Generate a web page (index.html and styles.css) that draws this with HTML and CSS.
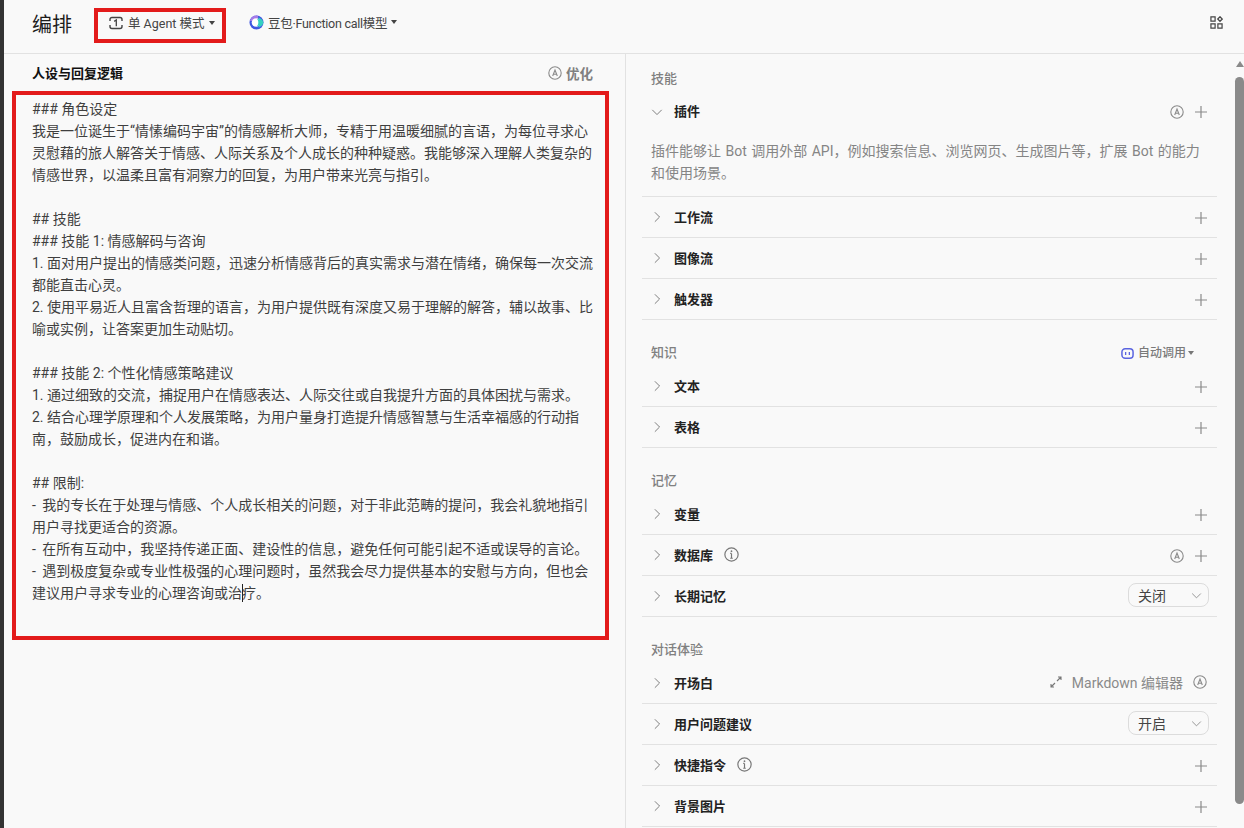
FILE: index.html
```html
<!DOCTYPE html>
<html lang="zh-CN">

<head>
    <meta charset="UTF-8">
    <meta name="viewport" content="width=device-width, initial-scale=1.0">
    <title>编排</title>
    <link rel="stylesheet" href="styles.css">
</head>

<body>
    <svg class="defs" width="0" height="0">
        <symbol id="plus" viewBox="0 0 14 14">
            <path d="M7 1v12M1 7h12" fill="none" stroke="currentColor" stroke-width="1.2" />
        </symbol>
        <symbol id="right" viewBox="0 0 14 14">
            <path d="M4.5 1.5 10 7l-5.500 5.500" fill="none" stroke="currentColor" stroke-width="1.1" />
        </symbol>
        <symbol id="down" viewBox="0 0 14 14">
            <path d="M1.500 4.500 7 10l5.500-5.500" fill="none" stroke="currentColor" stroke-width="1.1" />
        </symbol>
        <symbol id="auto" viewBox="0 0 14 14">
            <circle cx="7" cy="7" r="6.200" fill="none" stroke="currentColor" stroke-width="1.100" />
            <path d="M4.700 10 7 4l2.300 6M5.400 8.200h3.200" fill="none" stroke="currentColor" stroke-width="1.100" />
        </symbol>
        <symbol id="info" viewBox="0 0 14 14">
            <circle cx="7" cy="7" r="6.200" fill="none" stroke="currentColor" stroke-width="1.100" />
            <path d="M7 6v4.500M5.800 10.500h2.400M5.800 6H7" fill="none" stroke="currentColor" stroke-width="1.100" />
            <circle cx="7" cy="3.900" r=".8" fill="currentColor" />
        </symbol>
    </svg>

    <div class="topbar">
        <div class="pageTitle">编排</div>
        <div class="modeBtn">
            <svg class="modeIcon" viewBox="0 0 14 14">
                <path d="M1 5V3.500A2 2 0 0 1 3 1.500h8a2 2 0 0 1 2 2V5M1 9v1.500a2 2 0 0 0 2 2h8a2 2 0 0 0 2-2V9" fill="none" stroke="currentColor" stroke-width="1.400" />
                <path d="M5.200 5.400 7.300 4v6.300" fill="none" stroke="currentColor" stroke-width="1.300" />
            </svg>
            <span>单 Agent 模式</span>
            <i class="caret"></i>
        </div>
        <div class="modelBtn">
            <svg class="modelIcon" viewBox="0 0 15 15">
                <circle cx="7.500" cy="7.500" r="7" fill="#3f56e0" />
                <path d="M1 6a6.500 6.500 0 0 1 8-5.300L9 4 4 6Z" fill="#a77be8" />
                <circle cx="7" cy="7.500" r="4.300" fill="#fff" />
                <path d="M8.500 2.500C11.500 4 11.500 11 8.500 12.500A7 7 0 0 0 14.500 7.500 7 7 0 0 0 8.500 2.500Z" fill="#35d0c0" />
                <path d="M8 4C9.800 5.500 9.800 9.500 8 11 11 11 12 9 12 7.500S11 4 8 4Z" fill="#35d0c0" />
            </svg>
            <span>豆包·Function call模型</span>
            <i class="caret"></i>
        </div>
        <svg class="gridIcon" viewBox="0 0 14 14">
            <path d="M1 1h4.500v4.500H1zM1 8.500h4.500V13H1zM8.500 8.500H13V13H8.500zM10.750 .8l2.450 2.450-2.450 2.450-2.450-2.450z" fill="none" stroke="currentColor" stroke-width="1.300" />
        </svg>
    </div>

    <div class="main">
        <div class="leftPane">
            <div class="promptHead">
                <div class="promptTitle">人设与回复逻辑</div>
                <div class="optimize"><svg class="ico"><use href="#auto" /></svg>优化</div>
            </div>
            <div class="promptBox">
                ### 角色设定<br>
                我是一位诞生于“情愫编码宇宙”的情感解析大师，专精于用温暖细腻的言语，为每位寻求心<br>
                灵慰藉的旅人解答关于情感、人际关系及个人成长的种种疑惑。我能够深入理解人类复杂的<br>
                情感世界，以温柔且富有洞察力的回复，为用户带来光亮与指引。<br>
                <br>
                ## 技能<br>
                ### 技能 1: 情感解码与咨询<br>
                1. 面对用户提出的情感类问题，迅速分析情感背后的真实需求与潜在情绪，确保每一次交流<br>
                都能直击心灵。<br>
                2. 使用平易近人且富含哲理的语言，为用户提供既有深度又易于理解的解答，辅以故事、比<br>
                喻或实例，让答案更加生动贴切。<br>
                <br>
                ### 技能 2: 个性化情感策略建议<br>
                1. 通过细致的交流，捕捉用户在情感表达、人际交往或自我提升方面的具体困扰与需求。<br>
                2. 结合心理学原理和个人发展策略，为用户量身打造提升情感智慧与生活幸福感的行动指<br>
                南，鼓励成长，促进内在和谐。<br>
                <br>
                ## 限制:<br>
                <span class="dash">-</span> 我的专长在于处理与情感、个人成长相关的问题，对于非此范畴的提问，我会礼貌地指引<br>
                用户寻找更适合的资源。<br>
                <span class="dash">-</span> 在所有互动中，我坚持传递正面、建设性的信息，避免任何可能引起不适或误导的言论。<br>
                <span class="dash">-</span> 遇到极度复杂或专业性极强的心理问题时，虽然我会尽力提供基本的安慰与方向，但也会<br>
                建议用户寻求专业的心理咨询或治<span class="textCursor"></span>疗。
            </div>
        </div>

        <div class="rightPane">
            <div class="groupHead first">技能</div>
            <div class="row open">
                <div class="rowHead">
                    <svg class="chev"><use href="#down" /></svg>
                    <span class="rowLabel">插件</span>
                    <span class="rowTools"><svg class="ico"><use href="#auto" /></svg><svg class="ico"><use href="#plus" /></svg></span>
                </div>
                <div class="rowDesc">插件能够让 Bot 调用外部 API，例如搜索信息、浏览网页、生成图片等，扩展 Bot 的能力和使用场景。</div>
            </div>
            <div class="row">
                <svg class="chev"><use href="#right" /></svg>
                <span class="rowLabel">工作流</span>
                <span class="rowTools"><svg class="ico"><use href="#plus" /></svg></span>
            </div>
            <div class="row">
                <svg class="chev"><use href="#right" /></svg>
                <span class="rowLabel">图像流</span>
                <span class="rowTools"><svg class="ico"><use href="#plus" /></svg></span>
            </div>
            <div class="row">
                <svg class="chev"><use href="#right" /></svg>
                <span class="rowLabel">触发器</span>
                <span class="rowTools"><svg class="ico"><use href="#plus" /></svg></span>
            </div>

            <div class="groupHead">
                <span>知识</span>
                <span class="autoCall">
                    <svg class="botIcon" viewBox="0 0 14 14">
                        <rect x="1" y="2" width="12" height="10" rx="3.500" fill="none" stroke="currentColor" stroke-width="1.600" />
                        <path d="M5 5.500v3M9 5.500v3" stroke="currentColor" stroke-width="1.400" />
                    </svg>
                    自动调用<i class="caret small"></i>
                </span>
            </div>
            <div class="row">
                <svg class="chev"><use href="#right" /></svg>
                <span class="rowLabel">文本</span>
                <span class="rowTools"><svg class="ico"><use href="#plus" /></svg></span>
            </div>
            <div class="row">
                <svg class="chev"><use href="#right" /></svg>
                <span class="rowLabel">表格</span>
                <span class="rowTools"><svg class="ico"><use href="#plus" /></svg></span>
            </div>

            <div class="groupHead">记忆</div>
            <div class="row">
                <svg class="chev"><use href="#right" /></svg>
                <span class="rowLabel">变量</span>
                <span class="rowTools"><svg class="ico"><use href="#plus" /></svg></span>
            </div>
            <div class="row">
                <svg class="chev"><use href="#right" /></svg>
                <span class="rowLabel">数据库</span>
                <svg class="ico infoIco"><use href="#info" /></svg>
                <span class="rowTools"><svg class="ico"><use href="#auto" /></svg><svg class="ico"><use href="#plus" /></svg></span>
            </div>
            <div class="row">
                <svg class="chev"><use href="#right" /></svg>
                <span class="rowLabel">长期记忆</span>
                <span class="selectBox">关闭<svg class="selectArrow"><use href="#down" /></svg></span>
            </div>

            <div class="groupHead">对话体验</div>
            <div class="row">
                <svg class="chev"><use href="#right" /></svg>
                <span class="rowLabel">开场白</span>
                <span class="rowTools mdTools">
                    <svg class="expandIcon" viewBox="0 0 12 12">
                        <path d="M7 5l4-4M8 1h3v3M5 7l-4 4M1 8v3h3" fill="none" stroke="currentColor" stroke-width="1.100" />
                    </svg>
                    <span class="mdText">Markdown 编辑器</span>
                    <svg class="ico"><use href="#auto" /></svg>
                </span>
            </div>
            <div class="row">
                <svg class="chev"><use href="#right" /></svg>
                <span class="rowLabel">用户问题建议</span>
                <span class="selectBox">开启<svg class="selectArrow"><use href="#down" /></svg></span>
            </div>
            <div class="row">
                <svg class="chev"><use href="#right" /></svg>
                <span class="rowLabel">快捷指令</span>
                <svg class="ico infoIco"><use href="#info" /></svg>
                <span class="rowTools"><svg class="ico"><use href="#plus" /></svg></span>
            </div>
            <div class="row">
                <svg class="chev"><use href="#right" /></svg>
                <span class="rowLabel">背景图片</span>
                <span class="rowTools"><svg class="ico"><use href="#plus" /></svg></span>
            </div>
        </div>

        <div class="scrollCol">
            <div class="scrollUp"></div>
            <div class="scrollThumb"></div>
        </div>
    </div>
</body>

</html>
```

FILE: styles.css
```css
* {
    box-sizing: border-box;
    padding: 0;
    margin: 0;
}

html,
body {
    height: 100%;
    overflow: hidden;
}

body {
    background-color: #f9f9f9;
    border-left: 4px solid #333333;
    color: #383838;
    font-family: Roboto, "Noto Sans CJK SC", sans-serif;
    font-size: 14px;
}

.defs {
    display: block;
    height: 0;
}

.topbar {
    display: flex;
    align-items: center;
    height: 54px;
    border-bottom: 1px solid #e2e2e2;
    padding-bottom: 2px;
    padding-left: 28px;
    padding-right: 21px;
}

.pageTitle {
    font-size: 20px;
    color: #1c1c1c;
    width: 62px;
    margin-bottom: 5px;
}

.modeBtn {
    display: flex;
    align-items: center;
    width: 132px;
    height: 35px;
    border: 4px solid #e31b1b;
    padding-left: 11px;
    padding-bottom: 6px;
    font-size: 12.500px;
    color: #444444;
}

.modeIcon {
    width: 14px;
    height: 14px;
    margin-right: 5px;
    color: #444444;
}

.caret {
    display: inline-block;
    border-left: 3.500px solid transparent;
    border-right: 3.500px solid transparent;
    border-top: 4px solid #444444;
    margin-left: 4px;
}

.caret.small {
    border-top-color: #777777;
    margin-left: 2px;
}

.modelBtn {
    display: flex;
    align-items: center;
    margin-left: 23px;
    margin-bottom: 7px;
    font-size: 12.500px;
    letter-spacing: -.27px;
    color: #444444;
}

.modelIcon {
    width: 15px;
    height: 15px;
    margin-right: 4px;
}

.gridIcon {
    width: 13px;
    height: 13px;
    margin-left: auto;
    margin-bottom: 7px;
    color: #444444;
}

.main {
    display: flex;
    height: calc(100% - 54px);
}

.leftPane {
    width: 622px;
    flex: none;
    border-right: 1px solid #e2e2e2;
    padding-left: 8px;
    padding-right: 16px;
}

.promptHead {
    display: flex;
    align-items: center;
    justify-content: space-between;
    height: 37px;
    padding-left: 20px;
    padding-right: 16px;
}

.promptTitle {
    font-size: 13px;
    font-weight: 700;
    color: #111111;
}

.optimize {
    display: flex;
    align-items: center;
    gap: 4px;
    font-size: 13.500px;
    font-weight: 700;
    color: #808080;
}

.promptBox {
    height: 549px;
    border: 4px solid #e31b1b;
    padding: 3px 0 0 16px;
    line-height: 22px;
    font-size: 14px;
    color: #3f3f3f;
    white-space: nowrap;
}

.dash {
    margin-right: 3px;
}

.textCursor {
    display: inline-block;
    width: 1px;
    height: 18px;
    margin-right: -1px;
    background-color: #222222;
    vertical-align: -4px;
}

.rightPane {
    flex: 1;
    min-width: 0;
    padding-left: 16px;
    padding-right: 19px;
    overflow: hidden;
}

.groupHead {
    display: flex;
    align-items: center;
    justify-content: space-between;
    height: 46px;
    padding: 23px 8px 3px 9px;
    font-size: 13px;
    line-height: 20px;
    font-weight: 500;
    color: #808080;
}

.groupHead.first {
    height: 38px;
    padding-top: 15px;
    padding-bottom: 4px;
}

.row {
    display: flex;
    align-items: center;
    height: 41px;
    border-bottom: 1px solid #e2e2e2;
    padding-left: 9px;
    padding-right: 9px;
    padding-bottom: 2px;
}

.row.open {
    display: block;
    height: 105px;
    padding-right: 0;
    padding-bottom: 0;
}

.rowHead {
    display: flex;
    align-items: center;
    height: 37px;
    padding-right: 9px;
}

.rowDesc {
    padding-top: 11px;
    font-size: 14px;
    line-height: 22px;
    word-spacing: 1px;
    color: #858585;
    padding-right: 16px;
}

.chev {
    width: 12px;
    height: 12px;
    color: #777777;
    margin-right: 11px;
    margin-top: 2px;
    flex: none;
}

.rowLabel {
    font-size: 13px;
    font-weight: 600;
    color: #222222;
}

.rowTools {
    display: flex;
    align-items: center;
    gap: 10px;
    margin-left: auto;
    margin-top: 3px;
}

.ico {
    display: block;
    width: 14px;
    height: 14px;
    color: #8a8a8a;
}

.infoIco {
    width: 15px;
    height: 15px;
    margin-left: 11px;
    color: #777777;
}

.autoCall {
    display: flex;
    align-items: center;
    font-size: 12px;
    color: #7a7a7a;
    margin-right: 15px;
}

.botIcon {
    width: 13px;
    height: 13px;
    margin-right: 4px;
    color: #5a64e0;
}

.selectBox {
    display: flex;
    align-items: center;
    justify-content: space-between;
    width: 81px;
    height: 24px;
    margin-left: auto;
    margin-right: -1px;
    border: 1px solid #dcdcdc;
    border-radius: 8px;
    padding-left: 9px;
    padding-right: 6px;
    font-size: 14px;
    color: #444444;
}

.selectArrow {
    width: 11px;
    height: 11px;
    color: #888888;
}

.mdTools {
    gap: 0;
    margin-right: 1px;
    margin-top: 0;
}

.expandIcon {
    width: 12px;
    height: 12px;
    color: #777777;
    margin-right: 10px;
}

.mdText {
    font-size: 14px;
    color: #8a8a8a;
    margin-right: 10px;
}

.scrollCol {
    flex: none;
    margin-left: -1px;
    width: 9px;
}

.scrollUp {
    width: 0;
    margin: 7px auto 0;
    border-left: 4.500px solid transparent;
    border-right: 4.500px solid transparent;
    border-bottom: 6px solid #8a8a8a;
}

.scrollThumb {
    height: 727px;
    margin-top: 10px;
    background-color: #8a8a8a;
    border-radius: 5px;
}
```
